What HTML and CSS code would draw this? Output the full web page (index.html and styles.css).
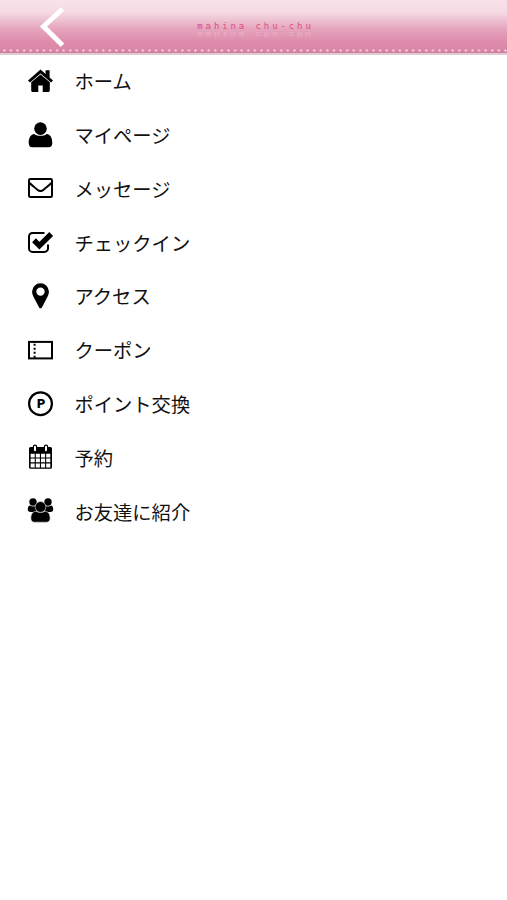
FILE: index.html
```html
<!DOCTYPE html>
<html lang="ja">
<head>
    <meta charset="UTF-8">
    <meta name="viewport" content="width=device-width, initial-scale=1.0">
    <title>mahina chu-chu</title>
    <link rel="stylesheet" href="styles.css">
</head>
<body>
    <header class="header">
        <a class="back" href="#" aria-label="戻る">
            <svg width="26" height="42" viewBox="0 0 26 42"><path d="M23.5 3 4.500 20.500l19 18.800" fill="none" stroke="#fff" stroke-width="5"/></svg>
        </a>
        <h1 class="logo" data-text="mahina chu-chu">mahina chu-chu</h1>
    </header>

    <nav>
        <ul class="menu">
            <li><a href="#">
                <svg class="icon" viewBox="0 0 28 28">
                    <path d="M14.5 1.6 2 12.400l1.900 2.200L14.500 5.500l10.600 9.100 1.900-2.200-3.400-3V2.200h-4v3.700z"/>
                    <path d="M14.500 6.500 5.200 14.300v8.200c0 .9.500 1.400 1.300 1.400h5.800v-6.400h4.400v6.400h5.800c.8 0 1.300-.5 1.300-1.400v-8.200z"/>
                </svg>
                <span>ホーム</span>
            </a></li>
            <li><a href="#">
                <svg class="icon" viewBox="0 0 28 28">
                    <circle cx="14.5" cy="6.6" r="6.3"/>
                    <path d="M8.300 11.900c1.800 1.400 3.800 1.900 6.200 1.900s4.400-.5 6.200-1.900c3.900.5 5.600 4.200 5.600 8.800 0 2.900-1.300 4.600-3.600 4.600H6.300c-2.300 0-3.600-1.700-3.600-4.600 0-4.600 1.700-8.300 5.600-8.800z"/>
                </svg>
                <span>マイページ</span>
            </a></li>
            <li><a href="#">
                <svg class="icon line" viewBox="0 0 28 28">
                    <rect x="3" y="4" width="23" height="18" rx="1.3"/>
                    <path d="M3.2 7.700c3 2.700 5.400 4.500 8.200 7 2.300 2 3.900 2 6.200 0 2.800-2.500 5.200-4.300 8.200-7"/>
                </svg>
                <span>メッセージ</span>
            </a></li>
            <li><a href="#">
                <svg class="icon line" viewBox="0 0 28 28">
                    <path d="M18.500 3.900h-12A3.500 3.500 0 0 0 3 7.400v12a3.500 3.500 0 0 0 3.500 3.500h12a3.500 3.500 0 0 0 3.500-3.500v-4"/>
                    <path class="check" d="m8 11.300 5.400 5.300L25.200 5"/>
                </svg>
                <span>チェックイン</span>
            </a></li>
            <li><a href="#">
                <svg class="icon" viewBox="0 0 28 28">
                    <path fill-rule="evenodd" d="M14.5.2a8.400 8.400 0 0 0-8.400 8.400c0 2.100.6 3.600 1.400 5.200l5.600 10.600c.6 1.200 2.200 1.200 2.800 0l5.600-10.600c.8-1.600 1.400-3.100 1.400-5.200A8.400 8.400 0 0 0 14.500.2zm0 4.200a4.200 4.200 0 1 1 0 8.400 4.200 4.200 0 0 1 0-8.400z"/>
                </svg>
                <span>アクセス</span>
            </a></li>
            <li><a href="#">
                <svg class="icon line" viewBox="0 0 28 28">
                    <rect x="3" y="4.900" width="23" height="16.500"/>
                    <path d="M8.600 6.800v14" stroke-dasharray="2 2"/>
                </svg>
                <span>クーポン</span>
            </a></li>
            <li><a href="#">
                <svg class="icon line" viewBox="0 0 28 28">
                    <circle cx="14.5" cy="12.700" r="11.400" stroke-width="2.200"/>
                    <text class="point" x="14.9" y="16.900" text-anchor="middle">P</text>
                </svg>
                <span>ポイント交換</span>
            </a></li>
            <li><a href="#">
                <svg class="icon" viewBox="0 0 28 28">
                    <path fill-rule="evenodd" d="M4.5 3h20A1.500 1.500 0 0 1 26 4.500v18.700a1.600 1.600 0 0 1-1.600 1.600H4.600A1.600 1.600 0 0 1 3 23.200V4.500A1.500 1.500 0 0 1 4.500 3zm.1 6.800v3.700h4.100V9.800zm5.200 0v3.700h4.100V9.800zm5.200 0v3.700h4.100V9.800zm5.200 0v3.700h4.100V9.800zM4.600 14.600v3.700h4.100v-3.700zm5.200 0v3.700h4.100v-3.700zm5.200 0v3.700h4.100v-3.700zm5.200 0v3.700h4.100v-3.700zM4.600 19.400v4h4.100v-4zm5.200 0v4h4.100v-4zm5.200 0v4h4.100v-4zm5.200 0v4h4.100v-4z"/>
                    <path class="ring" d="M9 2.700v3.600M20 2.700v3.600"/>
                    <path class="ring-hole" d="M9 2.700v3.600M20 2.700v3.600"/>
                </svg>
                <span>予約</span>
            </a></li>
            <li><a href="#">
                <svg class="icon" viewBox="0 0 28 28">
                    <circle cx="7" cy="4" r="3.700"/>
                    <circle cx="22" cy="4" r="3.700"/>
                    <path d="M4 7.500c2 1.300 4 1.300 6 0v6.500H4.500C2.700 14 1.800 13 1.800 11.500c0-2.500.7-3.800 2.200-4zM25 7.500c-2 1.300-4 1.300-6 0v6.500h5.500c1.800 0 2.700-1 2.700-2.500 0-2.500-.7-3.800-2.200-4z"/>
                    <circle class="front" cx="14.5" cy="9" r="5.400"/>
                    <path class="front" d="M10 13.200c2.800 1.800 6.200 1.800 9 0 3.500.3 5.100 3.200 5.100 7.100 0 2.600-1.400 3.900-3.600 3.900h-12c-2.200 0-3.600-1.300-3.600-3.900 0-3.900 1.600-6.800 5.100-7.100z"/>
                </svg>
                <span>お友達に紹介</span>
            </a></li>
        </ul>
    </nav>
</body>
</html>
```
FILE: styles.css
```css
body {
    margin: 0;
    background-color: #fff;
    color: #111;
    font-family: "Noto Sans CJK JP", sans-serif;
}

.header {
    position: relative;
    display: flex;
    justify-content: center;
    align-items: center;
    box-sizing: border-box;
    height: 55px;
    border-bottom: 2px solid #dfccd3;
    /* stitching along the bottom, over the pink fade */
    background:
        radial-gradient(circle at center, #f8d7e3 0, #f3c6d6 0.8px, transparent 1.6px) 1px 47px / 6.6px 7px repeat-x,
        linear-gradient(#f9e2ea 0, #f5dae4 12px, #edc2d2 20px, #e5a4be 29px, #de8dad 41px, #da86a7 50px, #cf7d9c 53px);
}

.back {
    position: absolute;
    left: 39px;
    top: 6px;
    line-height: 0;
}

.logo {
    position: relative;
    margin: 0 0 1px 4px;
    color: #d94f7f;
    font: 9px/12px "DejaVu Sans Mono", monospace;
    letter-spacing: 2.9px;
}

.logo::after {
    content: attr(data-text);
    position: absolute;
    left: 0;
    top: 8px;
    color: #fff;
    opacity: 0.22;
    transform: scaleY(-0.7);
}

.menu {
    margin: 0;
    padding: 0;
    list-style: none;
}

.menu a {
    display: flex;
    align-items: center;
    gap: 20.5px;
    height: 53.8px;
    padding-left: 26px;
    color: inherit;
    font-size: 19.3px;
    line-height: 28px;
    text-decoration: none;
}

.menu span {
    padding-bottom: 1.4px;
}

.icon {
    flex: none;
    width: 28px;
    height: 28px;
    overflow: visible;
    fill: #000;
}

.line {
    fill: none;
    stroke: #000;
    stroke-width: 2;
}

.line .check {
    stroke-width: 5.4;
}

.line .point {
    fill: #000;
    stroke: none;
    font: bold 12px "DejaVu Sans", sans-serif;
}

.ring {
    stroke: #000;
    stroke-width: 4.5;
    stroke-linecap: round;
}

.ring-hole {
    stroke: #fff;
    stroke-width: 2;
    stroke-linecap: round;
}

.front {
    stroke: #ccc;
    stroke-width: 0.7;
}
```
